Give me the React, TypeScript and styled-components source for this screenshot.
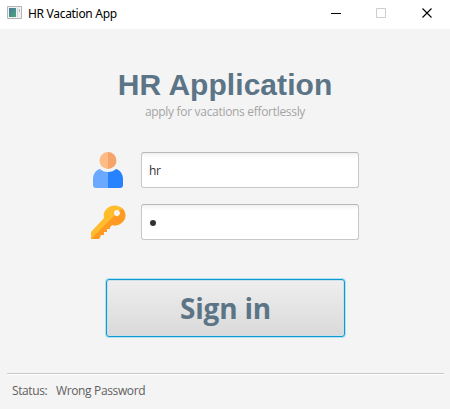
import React, { useState } from "react";
import styled, { createGlobalStyle } from "styled-components";

const GlobalStyle = createGlobalStyle`
  * { box-sizing: border-box; }
  body { margin: 0; background: #f4f4f4; overflow: hidden; }
`;

const Window = styled.div`
  width: 450px;
  height: 409px;
  display: flex;
  flex-direction: column;
  background: #f4f4f4;
  font-family: "Open Sans", "Noto Sans", sans-serif;
`;

const TitleBar = styled.header`
  height: 29px;
  flex: none;
  display: flex;
  align-items: flex-start;
  padding: 0 0 0 7px;
  background: #fff;
`;

const AppIcon = styled.svg`
  margin-top: 6px;
  flex: none;
`;

const WindowTitle = styled.div`
  flex: 1;
  margin-left: 6px;
  padding-top: 4px;
  font-family: "Noto Sans", sans-serif;
  font-size: 12px;
  line-height: 20px;
  letter-spacing: -0.3px;
  color: #000;
  white-space: nowrap;
`;

const Controls = styled.svg`
  flex: none;
`;

const Content = styled.main`
  flex: 1;
  display: flex;
  flex-direction: column;
  align-items: center;
`;

const Heading = styled.h1`
  margin: 39px 0 0;
  height: 34px;
  font: bold 30px/34px "Liberation Sans", Arial, sans-serif;
  letter-spacing: 0.05px;
  color: #5b7486;
  white-space: nowrap;
`;

const Tagline = styled.p`
  margin: 1px 0 0;
  height: 16px;
  font-size: 12px;
  line-height: 17px;
  letter-spacing: -0.31px;
  color: #a4a4a4;
  white-space: nowrap;
`;

const Form = styled.form`
  display: flex;
  flex-direction: column;
  align-items: center;
  margin-top: 33px;
`;

const Fields = styled.div`
  display: grid;
  grid-template-columns: 36px 218px;
  column-gap: 14px;
  row-gap: 16px;
`;

const Input = styled.input`
  width: 218px;
  height: 36px;
  padding: 1px 7px 0;
  border: 1px solid #c8c8c8;
  border-top-color: #b7b7b7;
  border-radius: 3px;
  outline: none;
  background: linear-gradient(#f1f1f1, #fff 5px);
  font-family: "Open Sans", sans-serif;
  font-size: 12px;
  letter-spacing: -0.3px;
  color: #323232;
`;

const MaskedInput = styled.div`
  width: 218px;
  height: 36px;
  display: flex;
  align-items: center;
  padding: 2px 7px 0;
  border: 1px solid #c8c8c8;
  border-top-color: #b7b7b7;
  border-radius: 3px;
  background: linear-gradient(#f1f1f1, #fff 5px);
`;

const Dot = styled.span`
  width: 6px;
  height: 6px;
  margin-left: 0.5px;
  border-radius: 50%;
  background: #323232;
`;

const SignIn = styled.button`
  width: 239px;
  height: 58px;
  margin: 39px 0 0 1px;
  padding: 0;
  border: 1px solid #0a9bd3;
  border-radius: 3px;
  outline: none;
  background: linear-gradient(#efefef, #d9d9d9);
  box-shadow: 0 0 0 1px #b5e0f1, inset 0 0 0 1px #cde0e7;
  font: bold 28px/36px "Open Sans", sans-serif;
  letter-spacing: -0.2px;
  color: #5b7486;
`;

const StatusBar = styled.footer`
  height: 36px;
  margin: 0 6px 0 7px;
  padding: 8px 0 0 5px;
  display: flex;
  gap: 9px;
  border-top: 1px solid #c8c8c8;
  box-shadow: inset 0 1px #fff;
  font-size: 12px;
  line-height: 18px;
  color: #606060;
  white-space: nowrap;
`;

const StatusLabel = styled.span`
  width: 35px;
  letter-spacing: -0.4px;
`;

const StatusText = styled.span`
  letter-spacing: -0.36px;
`;

const UserIcon = () => (
  <svg width="36" height="36" viewBox="0 0 36 36">
    <path d="M17 0a8.500 8.500 0 0 0 0 17z" fill="#ffbb85" />
    <path d="M17 0a8.500 8.500 0 0 1 0 17z" fill="#f5a56b" />
    <path d="M9 17C5 18 2 22 2 27v6q0 3 3 3h12V20q-5 0-8-3z" fill="#6aa9ff" />
    <path d="M25 17C29 18 32 22 32 27v6q0 3-3 3H17V20q5 0 8-3z" fill="#2682ff" />
  </svg>
);

const KeyIcon = () => (
  <svg width="36" height="36" viewBox="0 0 36 36">
    <path
      fillRule="evenodd"
      d="M16 4.500C20 .5 27 .5 31 4s5 10.500 0 14.500c-3 3-7 3.500-10 2.500l-2 2v2h-3v3h-3v3h-3l-2 4H0v-7l13-14c-1-4 0-7 3-9.500zM26 6a3 3 0 1 0 0 6 3 3 0 0 0 0-6z"
      fill="#ffbd2e"
    />
    <path
      d="M31.500 4.500c4 4 4 10.500-.5 14-3 3-7 3.500-10 2.500l-2 2v2h-3v3h-3v3h-3l-2 4H0L23.500 11.500A3 3 0 0 0 28 7z"
      fill="#ff9a22"
    />
  </svg>
);

export default function App() {
  const [username, setUsername] = useState("hr");
  return (
    <Window>
      <GlobalStyle />
      <TitleBar>
        <AppIcon width="15" height="13" viewBox="0 0 15 13">
          <defs>
            <linearGradient id="pane" x1="0" y1="0" x2="1" y2="1">
              <stop offset="0" stopColor="#477b9f" />
              <stop offset="1" stopColor="#4fa579" />
            </linearGradient>
          </defs>
          <path d="M.5 .5h14v12H.5z" fill="#f1f1f1" stroke="#b5b5b5" />
          <path d="M2 2h7v9H2z" fill="url(#pane)" />
          <path d="M10 2h1v9h-1z" fill="#d5d5d5" />
          <path d="M12 3h1v3h-1z" fill="#9fc8ad" />
        </AppIcon>
        <WindowTitle>HR Vacation App</WindowTitle>
        <Controls width="140" height="29" viewBox="0 0 140 29" fill="none">
          <path d="M21 13.500h10" stroke="#000" />
          <path d="M66.500 8.500h9v9h-9z" stroke="#ccc" />
          <path d="M112.500 8.500l9 9m0-9l-9 9" stroke="#000" strokeWidth="1.100" />
        </Controls>
      </TitleBar>
      <Content>
        <Heading>HR Application</Heading>
        <Tagline>apply for vacations effortlessly</Tagline>
        <Form onSubmit={(e) => e.preventDefault()}>
          <Fields>
            <UserIcon />
            <Input value={username} onChange={(e) => setUsername(e.target.value)} />
            <KeyIcon />
            <MaskedInput>
              <Dot />
            </MaskedInput>
          </Fields>
          <SignIn type="submit">Sign in</SignIn>
        </Form>
      </Content>
      <StatusBar>
        <StatusLabel>Status:</StatusLabel>
        <StatusText>Wrong Password</StatusText>
      </StatusBar>
    </Window>
  );
}
